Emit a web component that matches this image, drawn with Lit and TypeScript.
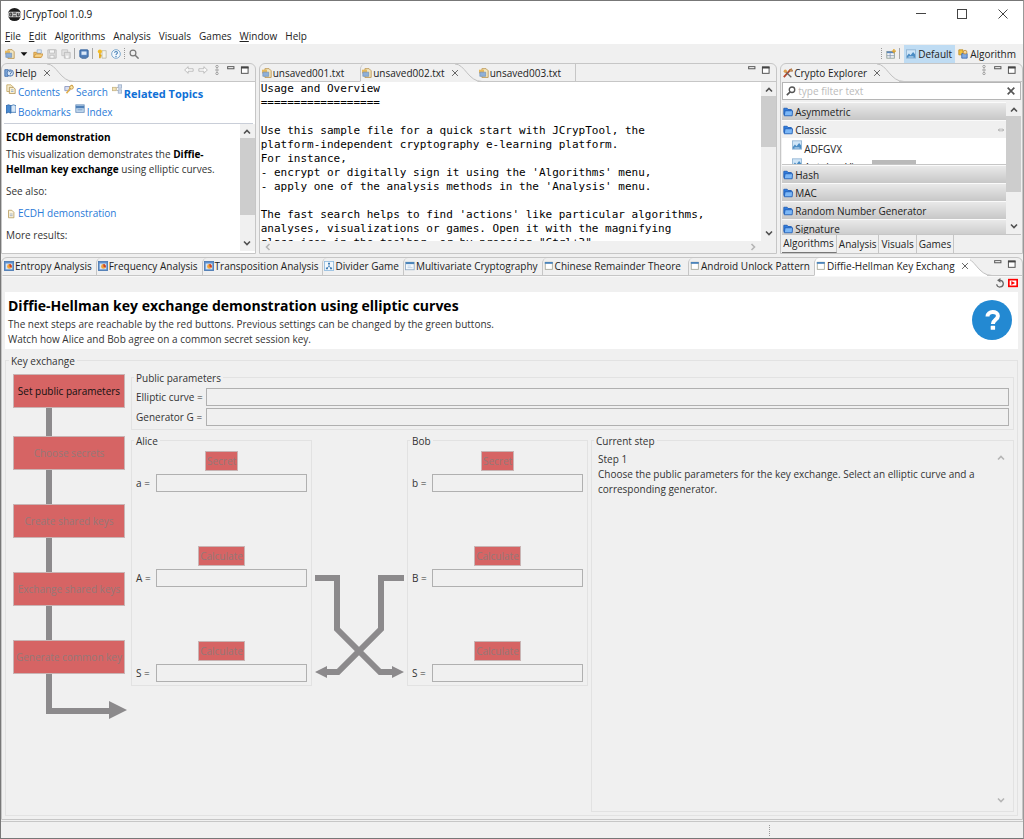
import { LitElement, html, css, svg, nothing } from "lit";
import type { TemplateResult } from "lit";
import { customElement, property, state } from "lit/decorators.js";
import { classMap } from "lit/directives/class-map.js";

const glyph = (body: unknown, size = 10) =>
  html`<svg class="glyph" width=${size} height=${size} viewBox="0 0 12 12" aria-hidden="true">${body}</svg>`;

const icons = {
  file: svg`<path d="M3.500 .8h5l2.500 2.500v8H3.500z" fill="#f3e6c0" stroke="#b8924a"/><rect x="0" y="2" width="6" height="4.500" fill="#e9b95a"/><path d="M1 5h7v5H1z" fill="#8fb0d8" stroke="#6f8fb8" stroke-width=".8"/>`,
  open: svg`<path d="M1 10V4h3l1 1h4v5z" fill="#f2c36b" stroke="#c9923c"/><path d="M5 1h5v4H5z" fill="#dfe9f5" stroke="#8aa4c4" stroke-width=".8"/><path d="M1 10l2-4h9l-2 4z" fill="#f8d48a" stroke="#c9923c"/>`,
  save: svg`<path d="M1 1h10v10H1z" fill="#dedede" stroke="#b7b7b7"/><path d="M3 1h6v4H3zM3.500 7.500h5v3.500h-5z" fill="#f6f6f6" stroke="#bcbcbc"/>`,
  saveAll: svg`<path d="M1 1h7v7H1z" fill="#e4e4e4" stroke="#c0c0c0"/><path d="M4 4h7v7H4z" fill="#dedede" stroke="#b7b7b7"/><path d="M6 8h3v3H6z" fill="#f6f6f6"/>`,
  console: svg`<rect x="1" y="1" width="10" height="9" rx="1" fill="#5683bd" stroke="#2e5b98"/><path d="M3 3h6v4H3z" fill="#dce9f8"/><path d="M3 11.200h6" stroke="#2e5b98"/>`,
  key: svg`<path d="M6 2h5v9H6z" fill="#f4f4ee" stroke="#b3ac8f" stroke-width=".8"/><circle cx="3.500" cy="3" r="2.500" fill="#f2bb25"/><path d="M3.500 5v6M3.500 8h2" stroke="#e0a515" stroke-width="2"/>`,
  help: svg`<circle cx="6" cy="6" r="5.200" fill="#f2f8fd" stroke="#6a9cc6" stroke-width="1"/><path d="M4.300 4.600c0-2.200 3.400-2.200 3.400 0 0 1.300-1.700 1.200-1.700 2.600" fill="none" stroke="#3f7cb4" stroke-width="1.300"/><circle cx="6" cy="9" r=".8" fill="#3f7cb4"/>`,
  search: svg`<circle cx="4.800" cy="4.800" r="3.500" fill="none" stroke="#777" stroke-width="1.400"/><path d="M7.500 7.500l4 4" stroke="#777" stroke-width="1.800"/>`,
  filter: svg`<circle cx="7.200" cy="4.500" r="3.300" fill="none" stroke="#555" stroke-width="1.600"/><path d="M5 7L1 11" stroke="#555" stroke-width="2"/>`,
  helpView: svg`<path d="M1 2h4v8H1z" fill="#7ea7d8" stroke="#3f6ca8"/><circle cx="7.500" cy="6" r="3.800" fill="#dceafa" stroke="#3f6ca8"/><path d="M6 5c0-2 3-2 3 0 0 1-1.500 1-1.500 2.200M7.500 8v1" fill="none" stroke="#2f5c98"/>`,
  contents: svg`<path d="M1 1h5l2 2v6H1z" fill="#f9f0d2" stroke="#c2a561"/><path d="M4 4h5l2 2v5.500H4z" fill="#f9f0d2" stroke="#b09255"/><path d="M6 7h3M6 9h3" stroke="#8fa8cc"/>`,
  helpSearch: svg`<path d="M1 3h6v5H1z" fill="#d9dff0" stroke="#8894bf"/><path d="M10 1L7 6l-4 5" stroke="#e3b04c" stroke-width="2"/><circle cx="9" cy="4" r="2.200" fill="#fbe6a6" stroke="#bf8f3a"/>`,
  related: svg`<path d="M3 6l6-3M3 6l6 3" stroke="#aaa"/><rect x=".5" y="4" width="4.500" height="4" fill="#f3e3b6" stroke="#c8b687"/><rect x="7.500" y="1" width="4" height="4" fill="#cfdcef" stroke="#9fb0c8"/><rect x="7.500" y="7" width="4" height="4" fill="#cfdcef" stroke="#9fb0c8"/>`,
  book: svg`<path d="M0 2l3-1 3 1v9l-3-1-3 1z" fill="#4a8ad0" stroke="#2c64a5"/><path d="M6 2l3-1 3 1v8H6z" fill="#d9e8f7" stroke="#3f77b5"/>`,
  index: svg`<rect x="1" y="1" width="10" height="9" fill="#c5dbf0" stroke="#6d91bd"/><path d="M1 3.500h10" stroke="#4f80b8" stroke-width="3"/><path d="M3 7h6" stroke="#6d91bd"/>`,
  topic: svg`<path d="M3 1.500h4l2.500 2.500v6.500H3z" fill="#fbf3dc" stroke="#b89d62"/><path d="M4.500 6h3.500M4.500 8h3.500" stroke="#9aa9c0"/>`,
  explorer: svg`<path d="M1 11L9 2" stroke="#b4472d" stroke-width="2.200"/><path d="M1.500 3l8.500 8" stroke="#666" stroke-width="1.600"/><circle cx="2.800" cy="3.800" r="2" fill="#e0a04d"/><path d="M7 3.500L10 .8l1.500 3z" fill="#e6c07a" stroke="#9c5a2b"/>`,
  folder: svg`<path d="M1 1.500h4l1 1.500h4v6H1z" fill="#2f7de0" stroke="#1d5cb5"/><path d="M1.500 10.500L2.500 4.500h9L11 10.500z" fill="#7db8f7" stroke="#1d5cb5"/>`,
  picture: svg`<rect x=".5" y="1" width="11" height="10" fill="#cfe5f7" stroke="#8fb3d2"/><path d="M1 8.500l2.500-3 2 2 3-4 2.500 3v4H1z" fill="#4a8cc4"/><path d="M3 9.500h6" stroke="#dcebf8"/>`,
  chart: svg`<rect x=".5" y=".5" width="11" height="11" fill="#5d8fcd" stroke="#4a78b2"/><path d="M2 3h8v7H2z" fill="#d8e6f6"/><circle cx="6.500" cy="6.500" r="2.800" fill="#f1a33a"/><path d="M6.500 6.500V3.700A2.800 2.800 0 0 1 9 8z" fill="#c43e32"/>`,
  tree: svg`<rect x=".5" y=".5" width="11" height="11" fill="#f2f8fd" stroke="#8fbadf"/><path d="M6 3v3M3.500 9L6 6l2.500 3" stroke="#4b84ba" fill="none"/><path d="M4.800 2h2.400v2H4.800zM2.300 7.800h2.400v2H2.300zM7.300 7.800h2.400v2H7.300z" fill="#3f7cb4"/>`,
  pane: svg`<rect x=".5" y="1.500" width="10.500" height="9" fill="#f5f9fd" stroke="#8fa9c4"/><path d="M1 2.500h10" stroke="#4b84ba" stroke-width="2.500"/><path d="M3 6h4M3 8h6" stroke="#b5cde4"/>`,
  view: svg`<rect x="1.500" y="1.500" width="8.500" height="8.500" fill="#fff" stroke="#a3a596"/><path d="M1 2.300h9.500" stroke="#4b84ba" stroke-width="2.200"/>`,
  perspective: svg`<rect x="1" y="3" width="9" height="8" fill="#f3f6fa" stroke="#8a9a90"/><path d="M1 4h9" stroke="#5b87bd" stroke-width="2"/><path d="M5 5v6M1 8h9" stroke="#8a9ab0"/><path d="M9.500 0v5M7 2.500h5" stroke="#dfa42e" stroke-width="1.600"/>`,
  puzzle: svg`<path d="M1 1h5v6H1z" fill="#f2c443" stroke="#b98b24"/><path d="M4.500 5.500h6.500V11H4.500z" fill="#7fa9e2" stroke="#3a66ac"/><circle cx="8.500" cy="3.800" r="2.200" fill="#f4d9a0" stroke="#c48b3a"/>`,
  back: svg`<path d="M.8 6l4.200-4v2.500h6v3H5V10z" fill="#fafafa" stroke="#b4b4b4"/>`,
  forward: svg`<path d="M11.200 6L7 2v2.500H1v3h6V10z" fill="#fafafa" stroke="#b4b4b4"/>`,
  dots: svg`<circle cx="6" cy="1.800" r="1.400" fill="#f8f8f8" stroke="#888" stroke-width=".9"/><circle cx="6" cy="6" r="1.400" fill="#f8f8f8" stroke="#888" stroke-width=".9"/><circle cx="6" cy="10.200" r="1.400" fill="#f8f8f8" stroke="#888" stroke-width=".9"/>`,
  minimize: svg`<rect x="2" y="2" width="7.500" height="2.500" fill="#fff" stroke="#555" stroke-width="1.200"/>`,
  maximize: svg`<rect x="1.700" y="2.500" width="8" height="7.500" fill="#fff" stroke="#555" stroke-width="1.200"/><path d="M1.200 3h9" stroke="#444" stroke-width="2.200"/>`,
  close: svg`<path d="M2.500 2.500l7 7M9.500 2.500l-7 7" stroke="#666" stroke-width="1.200"/>`,
  clear: svg`<path d="M2 2l8 8M10 2l-8 8" stroke="#555" stroke-width="2"/>`,
  restart: svg`<path d="M6 2.800A4 4 0 1 1 2 7.500" fill="none" stroke="#666" stroke-width="1.500"/><path d="M6.500 0v5.600L2.500 2.800z" fill="#666"/>`,
  record: svg`<rect x="1" y="2" width="10" height="8" fill="#fff" stroke="#f00" stroke-width="2"/><path d="M4 3.500l4.500 2.500L4 8.500z" fill="#f00"/>`,
};

const chevrons = {
  up: "M3 7.500L6 4.500L9 7.500",
  down: "M3 4.500L6 7.500L9 4.500",
  left: "M7.500 3L4.500 6L7.500 9",
  right: "M4.500 3L7.500 6L4.500 9",
};
const chevron = (dir: keyof typeof chevrons, faint = false) =>
  html`<svg class="glyph" width="12" height="12" viewBox="0 0 12 12" aria-hidden="true"><path d=${chevrons[dir]} fill="none" stroke=${faint ? "#b5b5b5" : "#505050"} stroke-width="1.600"/></svg>`;

const scrollbar = (size: number) => html`
  <div class="scrollbar">
    ${chevron("up")}
    <div class="track">
      <div class="thumb" style="flex:${size}"></div>
      <div style="flex:${100 - size}"></div>
    </div>
    ${chevron("down")}
  </div>`;

const shared = css`
  * { box-sizing: border-box; }
  button, input, textarea { font: inherit; color: inherit; margin: 0; border-radius: 0; }
  button { background: none; border: 0; padding: 0; white-space: nowrap; }
  a { color: #2a7ad8; text-decoration: none; }
  .glyph { display: block; flex: none; }
  .scrollbar { width: 15px; flex: none; display: flex; flex-direction: column; align-items: center; padding: 2px 0; background: #f0f0f0; }
  .track { flex: 1; width: 100%; display: flex; flex-direction: column; }
  .thumb { background: #cdcdcd; }
`;

interface Tab {
  label: string;
  icon: TemplateResult;
  pad?: number;
}

@customElement("tab-folder")
class TabFolder extends LitElement {
  @property({ attribute: false }) tabs: Tab[] = [];
  @property({ type: Number }) active = 0;
  @property({ type: Boolean }) lit = false;
  @property({ attribute: false }) tools: string[] = [];

  static styles = [
    shared,
    css`
      :host { display: flex; flex-direction: column; min-width: 0; min-height: 0; border: 1px solid #c6c6c6; border-radius: 6px 6px 0 0; background: #f0f0f0; }
      .strip { display: flex; height: 18px; flex: none; }
      .tab { display: flex; align-items: center; gap: 1px; height: 18px; padding: 0 4px 0 1px; border-bottom: 1px solid #c6c6c6; border-left: 1px solid #c6c6c6; border-radius: 5px 0 0 0; color: #222; }
      .tab:first-child { border-left-color: transparent; }
      .tab.active { position: relative; z-index: 1; border-bottom-color: transparent; }
      .tab.active span { margin-right: 4px; }
      .lit .tab.active { background: #fff; border-bottom-color: #fff; }
      .curve { display: block; flex: none; margin: 0 -5px 0 -8px; }
      .curve + .tab { border-left-color: transparent; }
      .fill { flex: 1; border-bottom: 1px solid #c6c6c6; display: flex; justify-content: flex-end; align-items: flex-start; gap: 4px; padding: 1px 5px 0 0; }
      .end { border-left: 1px solid #c6c6c6; border-radius: 0 5px 0 0; }
      .body { flex: 1; min-height: 0; display: flex; flex-direction: column; }
    `,
  ];

  render() {
    const base = this.lit ? "#fff" : "#f0f0f0";
    return html`
      <div class=${classMap({ strip: true, lit: this.lit })} role="tablist">
        ${this.tabs.map((tab, i) => {
          const on = i === this.active;
          return html`
            <button class=${classMap({ tab: true, active: on })} role="tab" aria-selected=${on}
              style="padding-right:${on ? 0 : (tab.pad ?? 4)}px">
              ${glyph(tab.icon)}<span>${tab.label}</span>${on ? glyph(icons.close) : nothing}
            </button>
            ${on
              ? html`<svg class="curve" width="30" height="18" viewBox="0 0 30 18" aria-hidden="true">
                  <path d="M0 0H4C13 0 16 17.500 30 17.500V18H0z" fill=${base} />
                  <path d="M3 0C13 0 16 17.500 30 17.500" fill="none" stroke="#c0c0c0" />
                </svg>`
              : nothing}`;
        })}
        <div class=${classMap({ fill: true, end: this.active < this.tabs.length - 1 })}>
          ${this.tools.map((t) => html`<button aria-label=${t}>${glyph(icons[t as keyof typeof icons])}</button>`)}
        </div>
      </div>
      <div class="body"><slot></slot></div>
    `;
  }
}

@customElement("crypto-explorer")
class CryptoExplorer extends LitElement {
  static styles = [
    shared,
    css`
      :host { display: flex; flex-direction: column; flex: 1; min-height: 0; padding: 0 1px; }
      .filter { display: flex; align-items: center; gap: 2px; height: 18px; flex: none; padding: 0 4px 0 3px; border: 1px solid #b5b5b5; background: #fff; }
      .filter input { flex: 1; min-width: 0; border: 0; outline: 0; padding: 0; background: none; }
      .filter input::placeholder { color: #bbb; opacity: 1; }
      .list { display: flex; flex: 1; min-height: 0; margin-top: 2px; border-bottom: 1px solid #c6c6c6; }
      .drawers { flex: 1; min-width: 0; overflow: hidden; }
      .drawer { display: flex; align-items: center; gap: 2px; width: 100%; height: 18px; padding: 0 0 0 1px; border-top: 1px solid #fafafa; background: linear-gradient(#e9e9e9, #c7c7c7); }
      .drawer.open { background: #f0f0f0; padding-right: 1px; }
      .drawer.open span { flex: 1; text-align: left; }
      .items { height: 27px; overflow: hidden; background: #fff; padding-left: 10px; border-bottom: 1px solid #c6c6c6; position: relative; }
      .item { display: flex; gap: 2px; height: 18px; line-height: 18px; padding-top: 2px; }
      .more { position: absolute; left: 40%; bottom: 0; width: 20%; height: 4px; background: #b9b9b9; }
      .tabs { display: flex; height: 18px; flex: none; }
      .tabs button { padding: 0 2px; border-right: 1px solid #c6c6c6; }
      .tabs .active { border-bottom: 1px solid #777; padding-left: 1px; }
    `,
  ];

  private drawer(name: string) {
    return html`<button class="drawer">${glyph(icons.folder)}<span>${name}</span></button>`;
  }

  render() {
    return html`
      <div class="filter">
        ${glyph(icons.filter)}
        <input aria-label="Filter" placeholder="type filter text" />
        <button aria-label="Clear">${glyph(icons.clear)}</button>
      </div>
      <div class="list">
        <div class="drawers">
          ${this.drawer("Asymmetric")}
          <button class="drawer open">
            ${glyph(icons.folder)}<span>Classic</span>
            ${glyph(svg`<path d="M5 4L1.500 6 5 8M7 4l3.500 2L7 8" fill="none" stroke="#999"/><path d="M4 6h4" stroke="#999"/>`, 8)}
          </button>
          <div class="items">
            <div class="item">${glyph(icons.picture)}<span>ADFGVX</span></div>
            <div class="item">${glyph(icons.picture)}<span>Autokey-Vigenère</span></div>
            <div class="more"></div>
          </div>
          ${["Hash", "MAC", "Random Number Generator", "Signature"].map((n) => this.drawer(n))}
        </div>
        ${scrollbar(73)}
      </div>
      <div class="tabs">
        ${["Algorithms", "Analysis", "Visuals", "Games"].map(
          (n, i) => html`<button class=${classMap({ active: i === 0 })}>${n}</button>`,
        )}
      </div>
    `;
  }
}

@customElement("help-view")
class HelpView extends LitElement {
  static styles = [
    shared,
    css`
      :host { display: flex; flex-direction: column; flex: 1; min-height: 0; padding-bottom: 2px; background: #fff; }
      nav { display: flex; flex-wrap: wrap; align-content: flex-start; column-gap: 4px; padding: 0 2px; border-bottom: 1px solid #c9ced8; margin: 0 2px; height: 42px; flex: none; }
      nav a { display: flex; gap: 2px; height: 20px; line-height: 16px; padding-top: 2px; }
      nav .topics { font-size: 11px; font-weight: 700; line-height: 20px; color: #0f6fd6; }
      nav .break { width: 100%; height: 0; }
      .scroll { flex: 1; min-height: 0; display: flex; }
      .text { flex: 1; min-width: 0; overflow: hidden; padding: 6px 4px 0; color: #333; line-height: 15px; }
      h2 { margin: 0 0 2px; font-size: 10px; line-height: 15px; color: #000; }
      b { color: #000; }
      p { margin: 0 0 7px; }
      .link { display: flex; align-items: center; gap: 2px; }
    `,
  ];

  render() {
    return html`
      <nav>
        <a href="#contents">${glyph(icons.contents)}Contents</a>
        <a href="#search">${glyph(icons.helpSearch)}Search</a>
        <a class="topics" href="#related">${glyph(icons.related)}Related Topics</a>
        <span class="break"></span>
        <a href="#bookmarks">${glyph(icons.book)}Bookmarks</a>
        <a href="#index">${glyph(icons.index)}Index</a>
      </nav>
      <div class="scroll">
        <div class="text">
          <h2>ECDH demonstration</h2>
          <p>This visualization demonstrates the <b>Diffie-Hellman key exchange</b> using elliptic curves.</p>
          <p>See also:</p>
          <p><a class="link" href="#ecdh">${glyph(icons.topic)}ECDH demonstration</a></p>
          <p>More results:</p>
        </div>
        ${scrollbar(78)}
      </div>
    `;
  }
}

const sampleText = `Usage and Overview
==================

Use this sample file for a quick start with JCrypTool, the
platform-independent cryptography e-learning platform.
For instance,
- encrypt or digitally sign it using the 'Algorithms' menu,
- apply one of the analysis methods in the 'Analysis' menu.

The fast search helps to find 'actions' like particular algorithms,
analyses, visualizations or games. Open it with the magnifying
glass icon in the toolbar, or by pressing "Ctrl+3".`;

@customElement("text-editor")
class TextEditor extends LitElement {
  static styles = [
    shared,
    css`
      :host { display: grid; grid-template: minmax(0, 1fr) 12px / minmax(0, 1fr) 15px; flex: 1; min-height: 0; background: #f0f0f0; }
      textarea { display: block; width: 100%; height: 100%; border: 0; outline: 0; resize: none; overflow: hidden; padding: 0 1px; background: #fff; color: #000; font-family: "DejaVu Sans Mono", "Liberation Mono", monospace; font-size: 11px; line-height: 14px; white-space: pre; }
      .across { display: flex; justify-content: space-between; align-items: center; padding: 0 2px; }
    `,
  ];

  render() {
    return html`
      <textarea aria-label="unsaved002.txt" spellcheck="false" .value=${sampleText}></textarea>
      ${scrollbar(39)}
      <div class="across">${chevron("left", true)}${chevron("right", true)}</div>
    `;
  }
}

@customElement("key-exchange")
class KeyExchange extends LitElement {
  @state() private steps = [
    "Set public parameters",
    "Choose secrets",
    "Create shared keys",
    "Exchange shared keys",
    "Generate common key",
  ];

  static styles = [
    shared,
    css`
      :host { display: flex; flex-direction: column; flex: 1; min-height: 0; padding: 0 4px 3px 3px; border-top: 1px solid #f8f8f8; }
      .actions { display: flex; justify-content: flex-end; align-items: flex-start; gap: 3px; height: 15px; flex: none; padding-top: 1px; }
      .banner { display: flex; align-items: center; justify-content: space-between; height: 57px; flex: none; padding: 0 6px 0 3px; background: #fff; color: #333; line-height: 15px; }
      h1 { margin: 0; font-size: 14px; line-height: 23px; color: #000; }
      p { margin: 0; }
      fieldset { min-width: 0; margin: 0; padding: 0; border: 1px solid #e2e2e2; }
      legend { margin-left: 2px; padding: 0 2px; line-height: 14px; height: 14px; }
      .main { flex: 1; min-height: 0; margin-top: 5px; padding: 0 3px 3px 7px; color: #333; }
      .main > legend { margin-left: -4px; }
      .layout { display: flex; gap: 6px; height: 100%; }
      .steps { display: flex; flex-direction: column; width: 112px; flex: none; padding-top: 6px; }
      .red { background: #d66464; border: 1px solid #c9b4b4; color: #111; display: block; }
      .red:disabled { color: #957878; }
      .steps .red { height: 34px; }
      .link { width: 6px; height: 34px; margin-left: 33px; background: #8c8a8c; }
      .steps .red:first-child + .link { height: 28px; }
      .turn { display: block; margin-left: 33px; }
      .right { flex: 1; min-width: 0; display: flex; flex-direction: column; gap: 4px; padding-top: 3px; }
      .params { display: block; padding: 3px 4px 3px; }
      .params > legend, .party > legend { margin-left: -2px; }
      .field { display: grid; grid-template-columns: 70px 1fr; align-items: center; }
      .field + .field { margin-top: 2px; }
      .field input, .value input { width: 100%; min-width: 0; height: 18px; padding: 0 2px; border: 1px solid #b0b0b0; background: #f0f0f0; }
      .parties { display: flex; gap: 3px; flex: 1; min-height: 0; align-items: flex-start; }
      .party { width: 181px; flex: none; padding: 3px 4px; }
      .stages { display: flex; flex-direction: column; gap: 54px; }
      .stage { display: flex; flex-direction: column; gap: 3px; align-items: center; }
      .stage .red { height: 20px; padding: 0 1px; }
      .value { display: grid; grid-template-columns: 20px 1fr; align-items: center; width: 100%; }
      .cross { display: block; flex: none; margin-top: 137px; }
      .current { flex: 1; align-self: stretch; }
      .explain { display: flex; height: 100%; padding: 4px 6px 5px; line-height: 15px; }
      .explain p { flex: 1; }
      .arrows { display: flex; flex-direction: column; justify-content: space-between; }
    `,
  ];

  private party(name: string, secret: string, shared: string) {
    const rows = [
      ["Secret", secret],
      ["Calculate", shared],
      ["Calculate", "S"],
    ];
    return html`
      <fieldset class="party">
        <legend>${name}</legend>
        <div class="stages">
          ${rows.map(
            ([action, symbol]) => html`
              <div class="stage">
                <button class="red" disabled>${action}</button>
                <div class="value">
                  <label for="${name}-${symbol}">${symbol} =</label>
                  <input id="${name}-${symbol}" readonly />
                </div>
              </div>`,
          )}
        </div>
      </fieldset>`;
  }

  render() {
    return html`
      <div class="actions">
        <button aria-label="Restart">${glyph(icons.restart)}</button>
        <button aria-label="Record">${glyph(icons.record)}</button>
      </div>
      <div class="banner">
        <div>
          <h1>Diffie-Hellman key exchange demonstration using elliptic curves</h1>
          <p>The next steps are reachable by the red buttons. Previous settings can be changed by the green buttons.</p>
          <p>Watch how Alice and Bob agree on a common secret session key.</p>
        </div>
        <button aria-label="Help">
          <svg class="glyph" width="40" height="40" viewBox="0 0 40 40" aria-hidden="true">
            <circle cx="20" cy="20" r="20" fill="#2389d2" />
            <path d="M15.500 16.500c-.3-5.700 10.400-6 10.400-.6 0 3.800-5 4-5 8" fill="none" stroke="#fff" stroke-width="4" />
            <rect x="18.700" y="25.800" width="4.400" height="4" rx=".6" fill="#fff" />
          </svg>
        </button>
      </div>
      <fieldset class="main">
        <legend>Key exchange</legend>
        <div class="layout">
          <div class="steps">
            ${this.steps.map(
              (step, i) => html`
                <button class="red" ?disabled=${i > 0}>${step}</button>
                ${i < this.steps.length - 1 ? html`<div class="link"></div>` : nothing}`,
            )}
            <svg class="turn" width="81" height="46" viewBox="0 0 81 46" aria-hidden="true">
              <path d="M0 0h6v34h57v-7l18 9-18 9v-5H0z" fill="#8c8a8c" />
            </svg>
          </div>
          <div class="right">
            <fieldset class="params">
              <legend>Public parameters</legend>
              <div class="field"><label for="curve">Elliptic curve =</label><input id="curve" readonly /></div>
              <div class="field"><label for="gen">Generator G =</label><input id="gen" readonly /></div>
            </fieldset>
            <div class="parties">
              ${this.party("Alice", "a", "A")}
              <svg class="cross" width="89" height="110" viewBox="0 0 89 110" aria-hidden="true">
                <g fill="none" stroke="#8c8a8c" stroke-width="6">
                  <path d="M0 7h22v51l43 43h14" />
                  <path d="M89 7H66v51l-43 43H10" />
                </g>
                <path d="M0 101l12-6v12zM89 101l-12-6v12z" fill="#8c8a8c" />
              </svg>
              ${this.party("Bob", "b", "B")}
              <fieldset class="current">
                <legend>Current step</legend>
                <div class="explain">
                  <p>Step 1<br />Choose the public parameters for the key exchange. Select an elliptic curve and a corresponding generator.</p>
                  <div class="arrows">${chevron("up", true)}${chevron("down", true)}</div>
                </div>
              </fieldset>
            </div>
          </div>
        </div>
      </fieldset>
    `;
  }
}

@customElement("app-root")
class AppRoot extends LitElement {
  static styles = [
    shared,
    css`
      :host { display: grid; grid-template-rows: 26px 17px 19px minmax(0, 191fr) minmax(0, 564fr) auto; grid-template-columns: minmax(0, 1fr); box-sizing: border-box; height: 100vh; min-height: 780px; border: 1px solid #777; border-right-color: #999; background: #f0f0f0; font-family: "Open Sans", "Noto Sans", sans-serif; font-size: 10px; line-height: 14px; color: #222; }
      .title { display: flex; align-items: center; gap: 1px; padding: 0 14px 0 6px; background: #fff; color: #111; }
      .title span { flex: 1; }
      .window { display: flex; gap: 29px; }
      .menu { display: flex; align-items: center; gap: 8px; padding: 0 4px; background: #fff; }
      .tools { display: flex; align-items: center; gap: 4px; padding: 0 7px 0 4px; }
      .sep { width: 1px; height: 11px; background: #a8a8a8; margin-left: -1px; }
      .dotted { width: 0; height: 11px; background: none; border-left: 1px dotted #999; }
      .space { flex: 1; }
      .mode { display: flex; align-items: center; gap: 2px; height: 18px; padding: 0 3px 0 2px; margin-right: -3px; }
      .mode.on { background: #bfdcf3; }
      .top { display: grid; grid-template-columns: 255fr 519fr 243fr; gap: 3px; padding: 0 0 1px; }
      .top > * { overflow: hidden; }
      .bottom { margin-top: 2px; }
      .status { height: 17px; margin-top: 1px; border-top: 1px solid #c6c6c6; display: flex; justify-content: center; align-items: center; padding-left: 514px; }
    `,
  ];

  private menu(label: string, hot = false) {
    return html`<button>${hot ? html`<u>${label[0]}</u>${label.slice(1)}` : label}</button>`;
  }

  private tool(name: keyof typeof icons) {
    return html`<button aria-label=${name}>${glyph(icons[name])}</button>`;
  }

  render() {
    return html`
      <header class="title">
        <svg class="glyph" width="15" height="15" viewBox="0 0 16 16" aria-hidden="true">
          <circle cx="8" cy="8" r="7" fill="#1c1c1c" />
          <rect x="1" y="5" width="14" height="6" rx="2" fill="#c9c9c9" />
          <path d="M3 6.500h2v3H3zM6.500 6.500h3M6.500 9.500h3M11 6.500v3h2v-3" stroke="#222" fill="none" />
        </svg>
        <span>JCrypTool 1.0.9</span>
        <div class="window">
          <button aria-label="Minimize">${glyph(svg`<path d="M1 5.500h10" stroke="#444"/>`, 12)}</button>
          <button aria-label="Maximize">${glyph(svg`<rect x="1.500" y="1.500" width="9" height="9" fill="none" stroke="#444"/>`, 12)}</button>
          <button aria-label="Close">${glyph(svg`<path d="M1.500 1.500l9 9M10.500 1.500l-9 9" stroke="#444"/>`, 12)}</button>
        </div>
      </header>
      <nav class="menu">
        ${this.menu("File", true)}${this.menu("Edit", true)}${this.menu("Algorithms")}${this.menu("Analysis")}
        ${this.menu("Visuals")}${this.menu("Games")}${this.menu("Window", true)}${this.menu("Help")}
      </nav>
      <div class="tools">
        ${this.tool("file")}
        <button aria-label="New options">${glyph(svg`<path d="M2 4h8L6 8.500z" fill="#111"/>`)}</button>
        ${this.tool("open")}${this.tool("save")}${this.tool("saveAll")}
        <span class="sep"></span>${this.tool("console")}<span class="sep"></span>
        ${this.tool("key")}${this.tool("help")}
        <span class="sep dotted"></span>${this.tool("search")}
        <span class="space"></span>
        <span class="sep dotted"></span>${this.tool("perspective")}<span class="sep"></span>
        <button class="mode on">${glyph(icons.picture)}<span>Default</span></button>
        <button class="mode">${glyph(icons.puzzle)}<span>Algorithm</span></button>
      </div>
      <div class="top">
        <tab-folder .tabs=${[{ label: "Help", icon: icons.helpView }]}
          .tools=${["back", "forward", "dots", "minimize", "maximize"]}>
          <help-view></help-view>
        </tab-folder>
        <tab-folder .active=${1} .tools=${["minimize", "maximize"]}
          .tabs=${[
            { label: "unsaved001.txt", icon: icons.file, pad: 16 },
            { label: "unsaved002.txt", icon: icons.file },
            { label: "unsaved003.txt", icon: icons.file, pad: 14 },
          ]}>
          <text-editor></text-editor>
        </tab-folder>
        <tab-folder .tabs=${[{ label: "Crypto Explorer", icon: icons.explorer }]}
          .tools=${["dots", "minimize", "maximize"]}>
          <crypto-explorer></crypto-explorer>
        </tab-folder>
      </div>
      <tab-folder class="bottom" lit .active=${7} .tools=${["minimize", "maximize"]}
        .tabs=${[
          { label: "Entropy Analysis", icon: icons.chart },
          { label: "Frequency Analysis", icon: icons.chart },
          { label: "Transposition Analysis", icon: icons.chart },
          { label: "Divider Game", icon: icons.tree },
          { label: "Multivariate Cryptography", icon: icons.pane },
          { label: "Chinese Remainder Theore", icon: icons.view, pad: 7 },
          { label: "Android Unlock Pattern", icon: icons.view },
          { label: "Diffie-Hellman Key Exchang", icon: icons.view },
        ]}>
        <key-exchange></key-exchange>
      </tab-folder>
      <footer class="status"><span class="dotted"></span></footer>
    `;
  }
}
